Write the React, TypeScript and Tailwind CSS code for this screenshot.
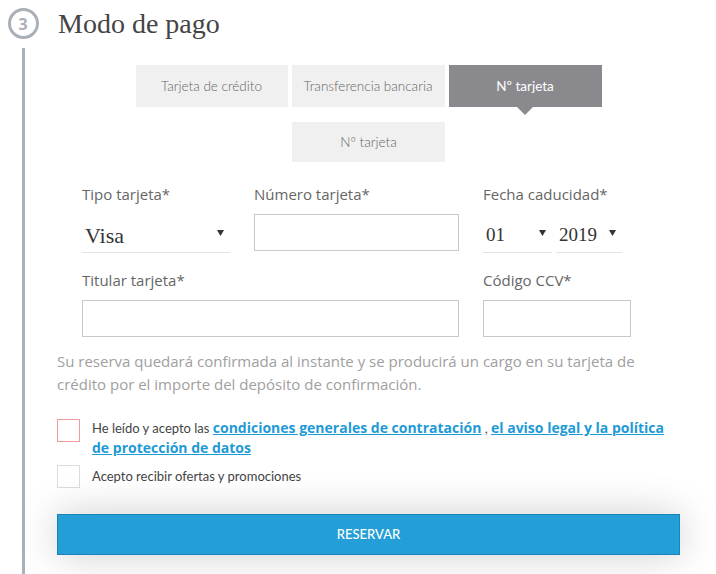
import React from 'react';

const sans = { fontFamily: '"Open Sans", "Liberation Sans", sans-serif' };
const serif = { fontFamily: '"Liberation Serif", "DejaVu Serif", serif' };
const geo = { fontFamily: 'Lato, "Open Sans", sans-serif' };

function Caret() {
  return (
    <svg width="7" height="6" viewBox="0 0 7 6" className="shrink-0">
      <path d="M0 0h7L3.5 6z" fill="#333" />
    </svg>
  );
}

function Tab({ label, active = false, width }: { label: string; active?: boolean; width: string }) {
  return (
    <div
      className={`relative flex h-[42px] items-center justify-center text-[13.5px] ${width} ${
        active ? 'bg-[#8a898e] text-white' : 'bg-[#f0f0f0] font-light text-[#666]'
      }`}
      style={geo}
    >
      {label}
      {active && (
        <span className="absolute left-1/2 top-full -ml-[8px] h-0 w-0 border-x-[8px] border-t-[8px] border-x-transparent border-t-[#8a898e]" />
      )}
    </div>
  );
}

function Select({ value, width, size }: { value: string; width: string; size: string }) {
  return (
    <div className={`flex h-[40px] items-center justify-between border-b border-[#e3e3e3] pl-[3px] pr-[6px] ${width}`}>
      <span className={`mt-[6px] ${size} text-[#333]`} style={serif}>
        {value}
      </span>
      <Caret />
    </div>
  );
}

function Label({ children }: { children: React.ReactNode }) {
  return (
    <div className="text-[15px] leading-5 text-[#666]" style={sans}>
      {children}
    </div>
  );
}

const linkCls = 'text-[14px] font-bold leading-[20px] text-[#1e9ad6] underline';

export default function App() {
  return (
    <div className="flex h-[574px] w-[716px] overflow-hidden bg-white">
      {/* step marker + rail */}
      <div className="flex w-[46px] shrink-0 flex-col items-center">
        <div
          className="mt-[8px] flex h-[31px] w-[31px] items-center justify-center rounded-full border-[3px] border-[#aab0b8] text-[16px] font-bold text-[#aab0b8]"
          style={sans}
        >
          3
        </div>
        <div className="mt-[9px] w-[3px] flex-1 bg-[#aab0b8]" />
      </div>

      <div className="flex w-[634px] flex-col pl-[11px]">
        <h2 className="mt-[6px] h-[59px] pl-[1px] text-[28px] leading-[36px] text-[#444]" style={serif}>
          Modo de pago
        </h2>

        <div className="flex justify-center gap-[4px]">
          <Tab label="Tarjeta de crédito" width="w-[152px]" />
          <Tab label="Transferencia bancaria" width="w-[153px]" />
          <Tab label="Nº tarjeta" width="w-[153px]" active />
        </div>
        <div className="mt-[15px] flex justify-center">
          <div
            className="flex h-[40px] w-[153px] items-center justify-center bg-[#f0f0f0] text-[13.5px] font-light text-[#666]"
            style={geo}
          >
            Nº tarjeta
          </div>
        </div>

        <div className="mt-[22px] grid grid-cols-[148px_205px_148px] gap-x-6 pl-[25px]">
          <div>
            <Label>Tipo tarjeta*</Label>
            <div className="mt-[9px]">
              <Select value="Visa" width="w-[148px]" size="text-[22px]" />
            </div>
          </div>
          <div>
            <Label>Número tarjeta*</Label>
            <div className="mt-[10px] h-[37px] border border-[#c8c8c8]" />
          </div>
          <div>
            <Label>Fecha caducidad*</Label>
            <div className="mt-[9px] flex gap-[4px]">
              <Select value="01" width="w-[69px]" size="text-[19px]" />
              <Select value="2019" width="w-[66px]" size="text-[19px]" />
            </div>
          </div>

          <div className="col-span-2 mt-[17px]">
            <Label>Titular tarjeta*</Label>
            <div className="mt-[10px] h-[37px] border border-[#c8c8c8]" />
          </div>
          <div className="mt-[17px]">
            <Label>Código CCV*</Label>
            <div className="mt-[10px] h-[37px] border border-[#c8c8c8]" />
          </div>
        </div>

        <p className="mt-[13px] text-[15px] leading-[23px] text-[#a0a0a0]" style={sans}>
          Su reserva quedará confirmada al instante y se producirá un cargo en su tarjeta de crédito por el importe del depósito de confirmación.
        </p>

        <div className="mt-[22px] flex gap-[12px]">
          <div className="mt-[1px] h-[23px] w-[23px] shrink-0 border border-[#ec9c9c]" />
          <div className="text-[13px] leading-[20px] text-[#444]" style={geo}>
            <div>
              He leído y acepto las{' '}
              <a className={linkCls} style={sans}>
                condiciones generales de contratación
              </a>{' '}
              ,{' '}
              <a className={linkCls} style={sans}>
                el aviso legal y la política
              </a>
            </div>
            <a className={linkCls} style={sans}>
              de protección de datos
            </a>
          </div>
        </div>

        <div className="mt-[7px] flex items-center gap-[12px]">
          <div className="h-[23px] w-[23px] shrink-0 border border-[#dcdcdc]" />
          <span className="text-[13px] text-[#444]" style={geo}>
            Acepto recibir ofertas y promociones
          </span>
        </div>

        <button
          className="mt-[26px] flex h-[41px] w-[623px] items-center justify-center border border-[#1b82ba] bg-[#249ed6] text-[13px] font-medium text-white shadow-[0_0_40px_rgba(0,0,0,0.2)]"
          style={geo}
        >
          RESERVAR
        </button>
      </div>
    </div>
  );
}
